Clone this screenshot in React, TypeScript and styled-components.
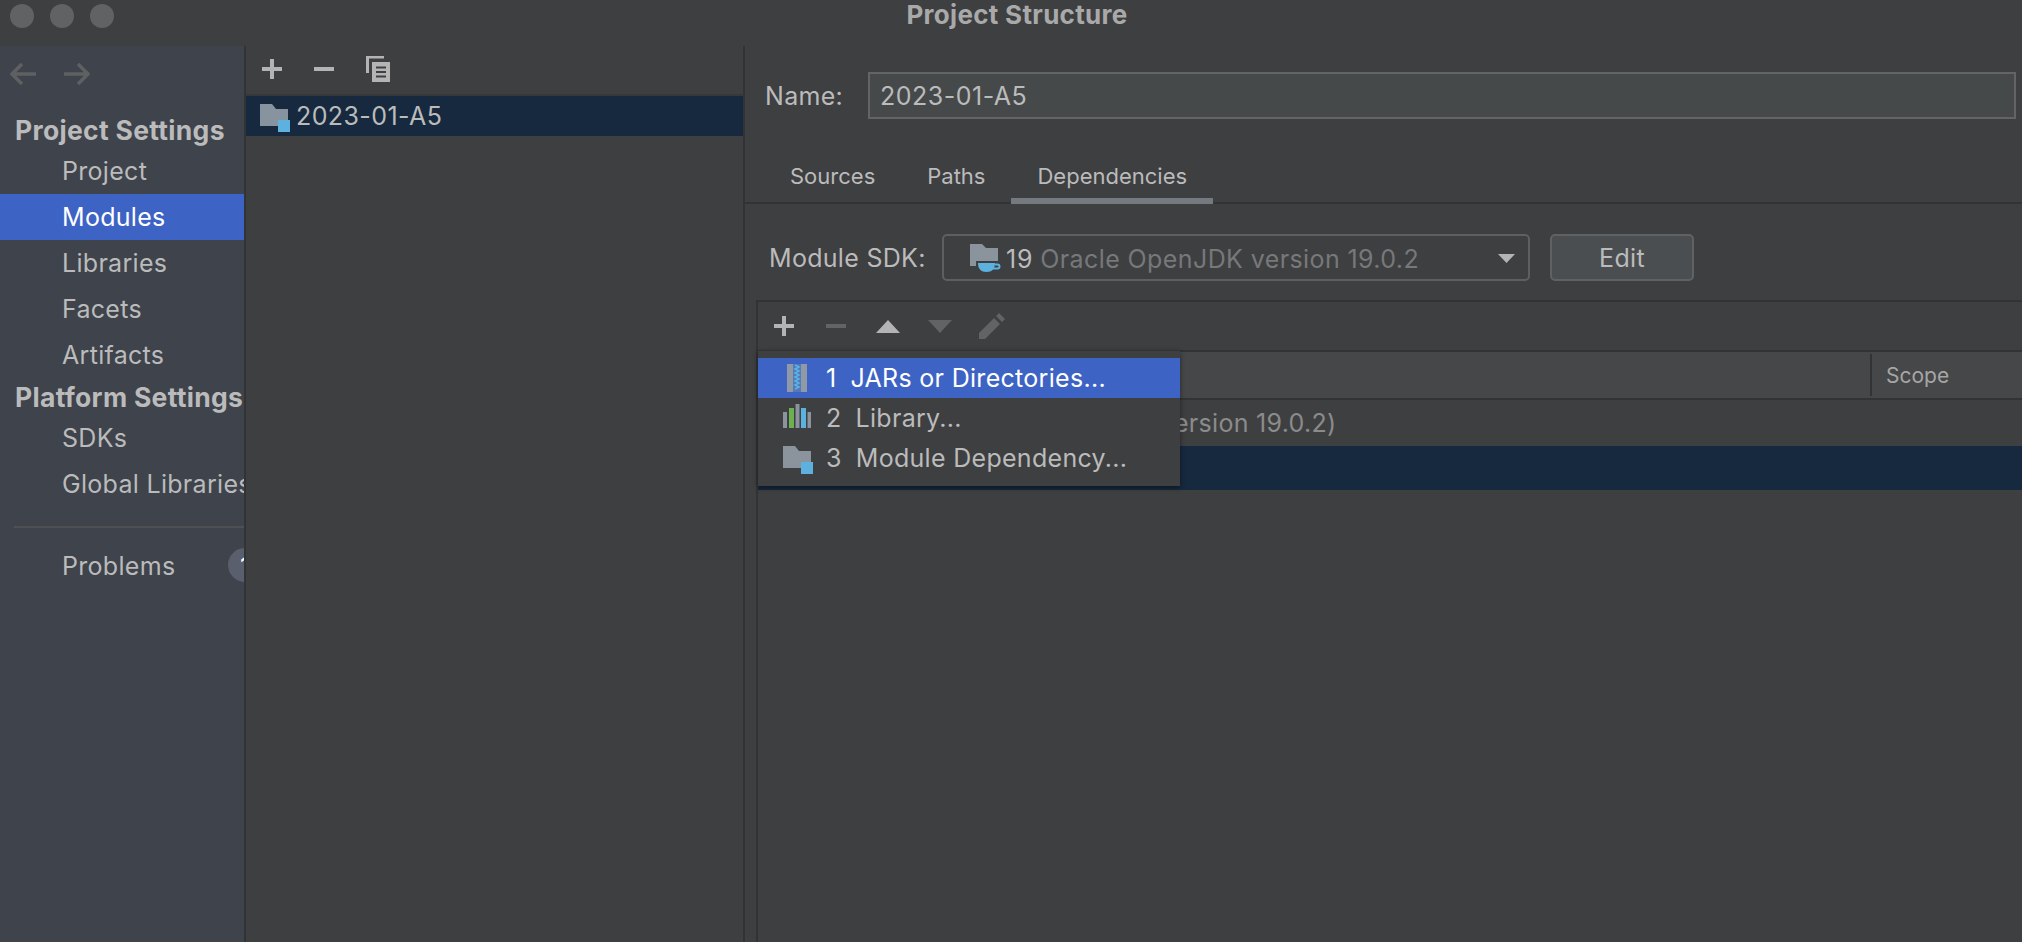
import React from "react";
import styled, { createGlobalStyle } from "styled-components";

const GlobalStyle = createGlobalStyle`
  html, body { margin: 0; padding: 0; height: 100%; background: #3e3f41; overflow: hidden; }
  * { box-sizing: border-box; }
`;

const Window = styled.div`
  width: 2022px;
  height: 942px;
  display: flex;
  flex-direction: column;
  background: #3e3f41;
  color: #bbbbbb;
  font-family: Inter, "Liberation Sans", sans-serif;
  font-size: 25px;
  letter-spacing: 0.3px;
  overflow: hidden;
`;

const TitleBar = styled.header`
  height: 46px;
  flex: none;
  display: flex;
  align-items: flex-start;
  padding: 4px 0 0 10px;
  position: relative;
`;

const Lights = styled.div`
  display: flex;
  gap: 16px;
`;

const Light = styled.span`
  width: 24px;
  height: 24px;
  border-radius: 50%;
  background: #616263;
`;

const Title = styled.div`
  position: absolute;
  top: 0;
  left: 12px;
  right: 0;
  text-align: center;
  line-height: 30px;
  font-size: 26px;
  font-weight: 700;
  color: #a9a9a9;
`;

const Body = styled.div`
  flex: 1;
  display: flex;
  min-height: 0;
`;

const Sidebar = styled.nav`
  width: 246px;
  flex: none;
  background: #3e434c;
  border-right: 2px solid #313335;
  overflow: hidden;
  position: relative;
`;

const History = styled.div`
  height: 65px;
  padding: 0 0 9px 10px;
  display: flex;
  gap: 28px;
  align-items: center;
`;

const Heading = styled.div<{ $h: number }>`
  height: ${(p) => p.$h}px;
  padding: 1px 0 0 15px;
  display: flex;
  align-items: center;
  font-weight: 700;
  font-size: 26.5px;
  color: #bbbbbb;
  white-space: nowrap;
`;

const NavItem = styled.div<{ $active?: boolean }>`
  height: 46px;
  padding-left: 62px;
  display: flex;
  align-items: center;
  white-space: nowrap;
  background: ${(p) => (p.$active ? "#3d63c4" : "transparent")};
  color: ${(p) => (p.$active ? "#ffffff" : "#bbbbbb")};
`;

const NavDivider = styled.div`
  height: 2px;
  margin: 19px 0 15px 14px;
  background: #4f5054;
`;

const Badge = styled.span`
  position: absolute;
  left: 228px;
  top: 502px;
  width: 34px;
  height: 34px;
  border-radius: 50%;
  background: #5a5f6e;
  color: #ffffff;
  font-size: 22px;
  font-weight: 600;
  display: flex;
  align-items: center;
  justify-content: center;
`;

const ListPanel = styled.section`
  width: 499px;
  flex: none;
  border-right: 2px solid #313335;
  display: flex;
  flex-direction: column;
`;

const ListTools = styled.div`
  height: 50px;
  flex: none;
  border-bottom: 2px solid #37383a;
  display: flex;
  align-items: center;
  padding: 0 0 2px 16px;
  gap: 32px;
`;

const ModuleRow = styled.div`
  height: 40px;
  flex: none;
  background: #17293e;
  display: flex;
  align-items: center;
  padding-left: 14px;
  gap: 6px;
  letter-spacing: 0.4px;
  svg {
    margin-top: 4px;
  }
`;

const Detail = styled.section`
  flex: 1;
  min-width: 0;
  display: flex;
  flex-direction: column;
`;

const NameRow = styled.div`
  height: 73px;
  flex: none;
  padding: 26px 6px 0 20px;
  display: flex;
  align-items: flex-start;
`;

const NameLabel = styled.label`
  line-height: 49px;
  width: 103px;
  flex: none;
`;

const NameInput = styled.div`
  flex: 1;
  height: 47px;
  background: #45494a;
  border: 2px solid #646464;
  padding-left: 10px;
  line-height: 45px;
  letter-spacing: 0.5px;
`;

const Tabs = styled.div`
  height: 85px;
  flex: none;
  border-bottom: 2px solid #313335;
  padding: 34px 0 0 19px;
  display: flex;
  align-items: stretch;
`;

const Tab = styled.div<{ $active?: boolean }>`
  height: 51px;
  padding: 0 26px;
  line-height: 46px;
  font-size: 22px;
  letter-spacing: 0;
  border-bottom: 6px solid ${(p) => (p.$active ? "#747a80" : "transparent")};
`;

const SdkRow = styled.div`
  height: 96px;
  flex: none;
  padding: 30px 0 0 24px;
  display: flex;
  align-items: flex-start;
`;

const SdkLabel = styled.label`
  line-height: 49px;
  width: 173px;
  flex: none;
  white-space: nowrap;
`;

const Combo = styled.div`
  width: 588px;
  height: 47px;
  border: 2px solid #5e6060;
  border-radius: 5px;
  background: #3e3f41;
  display: flex;
  align-items: center;
  padding: 2px 13px 0 26px;
`;

const ComboVersion = styled.span`
  margin-left: 5px;
  letter-spacing: 0.8px;
`;

const ComboHint = styled.span`
  margin-left: 7px;
  color: #77787a;
  flex: 1;
  white-space: nowrap;
  letter-spacing: 0.4px;
`;

const EditButton = styled.button`
  width: 144px;
  height: 47px;
  margin-left: 20px;
  border: 2px solid #5f6162;
  border-radius: 5px;
  background: #4b4e50;
  color: #bbbbbb;
  font: inherit;
  letter-spacing: inherit;
`;

const DepsBox = styled.div`
  flex: 1;
  margin-left: 11px;
  border-left: 2px solid #313335;
  border-top: 2px solid #313335;
  display: flex;
  flex-direction: column;
  position: relative;
`;

const DepsTools = styled.div`
  height: 48px;
  flex: none;
  display: flex;
  align-items: center;
`;

const ToolSlot = styled.span`
  width: 52px;
  flex: none;
  display: flex;
  justify-content: center;
`;

const TableHead = styled.div`
  height: 50px;
  flex: none;
  background: #464749;
  border-top: 2px solid #313335;
  border-bottom: 2px solid #313335;
  display: flex;
  justify-content: flex-end;
  align-items: stretch;
`;

const ScopeCol = styled.div`
  width: 152px;
  margin: 2px 0;
  border-left: 2px solid #313335;
  padding-left: 14px;
  display: flex;
  align-items: center;
  font-size: 21px;
  letter-spacing: 0;
  color: #a6a6a6;
`;

const TableRow = styled.div<{ $selected?: boolean }>`
  height: ${(p) => (p.$selected ? 44 : 46)}px;
  flex: none;
  background: ${(p) => (p.$selected ? "#17293e" : "transparent")};
  display: flex;
  align-items: center;
  padding-left: 126px;
  color: #8b8b8b;
  white-space: nowrap;
`;

const Popup = styled.div`
  position: absolute;
  left: 0;
  top: 48px;
  width: 422px;
  height: 136px;
  padding-top: 7px;
  background: #3e3f41;
  border-top: 1px solid #323334;
  box-shadow: 0 2px 5px rgba(0, 0, 0, 0.45);
  z-index: 2;
`;

const PopupItem = styled.div<{ $active?: boolean }>`
  height: 40px;
  display: flex;
  align-items: center;
  background: ${(p) => (p.$active ? "#3d63c4" : "transparent")};
  color: ${(p) => (p.$active ? "#ffffff" : "#bbbbbb")};
  white-space: nowrap;
`;

const PopupIcon = styled.span<{ $pad: number; $nudge?: number }>`
  width: 68px;
  flex: none;
  display: flex;
  justify-content: flex-start;
  padding-left: ${(p) => p.$pad}px;
  margin-top: ${(p) => p.$nudge ?? 0}px;
`;

const PopupNumber = styled.span`
  margin-right: 14px;
  flex: none;
`;

const GREY = "#b4b4b4";
const DIM = "#626365";

const PlusIcon = ({ color = GREY }: { color?: string }) => (
  <svg width="20" height="20" viewBox="0 0 20 20">
    <path d="M8 0h4v8h8v4h-8v8H8v-8H0V8h8z" fill={color} />
  </svg>
);

const MinusIcon = ({ color = GREY }: { color?: string }) => (
  <svg width="20" height="20" viewBox="0 0 20 20">
    <path d="M0 8h20v4H0z" fill={color} />
  </svg>
);

const CopyIcon = () => (
  <svg width="24" height="26" viewBox="0 0 24 26">
    <path d="M0 0h18v2.500H3V17H0z" fill={GREY} />
    <path d="M6 6h18v20H6z" fill={GREY} />
    <path d="M10 10.500h10v2H10zM10 15h10v2H10zM10 19.500h10v2H10z" fill="#3e3f41" />
  </svg>
);

const ArrowIcon = ({ flip }: { flip?: boolean }) => (
  <svg width="26" height="26" viewBox="0 0 26 26" style={flip ? { transform: "scaleX(-1)" } : undefined}>
    <path d="M12 3 2 13l10 10M2 13h24" fill="none" stroke="#5f6062" strokeWidth="3.500" />
  </svg>
);

const ModuleFolderIcon = () => (
  <svg width="30" height="28" viewBox="0 0 30 28">
    <path d="M0 0h12l4 5h12v17H0z" fill="#87939f" />
    <path d="M18 16h12v12H18z" fill="#5cb1de" />
  </svg>
);

const JdkFolderIcon = () => (
  <svg width="31" height="29" viewBox="0 0 31 29">
    <path d="M0 0h12l4 4h12v18H0z" fill="#8b939c" />
    <path d="M6 17h24v12H6z" fill="#3e3f41" />
    <path d="M0 17h6v5H0z" fill="#8b939c" />
    <path d="M8 19h17c0 6-3 9-8.500 9S8 25 8 19z" fill="#5cb1de" />
    <path d="M25 20.500h2.500a2 2 0 0 1 0 4H23" fill="none" stroke="#5cb1de" strokeWidth="2" />
  </svg>
);

const TriangleIcon = ({ down, color }: { down?: boolean; color: string }) => (
  <svg width="24" height="13" viewBox="0 0 24 13">
    <path d={down ? "M0 0h24L12 13z" : "M12 0l12 13H0z"} fill={color} />
  </svg>
);

const PencilIcon = () => (
  <svg width="26" height="26" viewBox="0 0 26 26">
    <path d="M0 26v-6L15 5l6 6L6 26zM17 3l3-3 6 6-3 3z" fill={DIM} />
  </svg>
);

const ComboArrow = () => (
  <svg width="17" height="9" viewBox="0 0 17 9">
    <path d="M0 0h17L8.500 9z" fill="#b4b4b4" />
  </svg>
);

const JarIcon = () => (
  <svg width="20" height="28" viewBox="0 0 20 28">
    <path d="M0 0h20v28H0z" fill="#8f9aa6" />
    <path d="M6 0h8v28H6z" fill="#5578b8" />
    <path
      d="M8 1l4 2-4 2 4 2-4 2 4 2-4 2 4 2-4 2 4 2-4 2 4 2-4 2"
      fill="none"
      stroke="#59b4e6"
      strokeWidth="1.500"
    />
  </svg>
);

const LibraryIcon = () => (
  <svg width="28" height="24" viewBox="0 0 28 24">
    <path d="M0 8h4v16H0z" fill="#8b939c" />
    <path d="M6 4h5v20H6z" fill="#6cb14f" />
    <path d="M12.500 0h4v24h-4z" fill="#8b939c" />
    <path d="M18 4h5v20h-5z" fill="#5cb1de" />
    <path d="M24.500 8h3.500v16h-3.500z" fill="#8b939c" />
  </svg>
);

const MenuFolderIcon = () => (
  <svg width="30" height="28" viewBox="0 0 30 28">
    <path d="M0 0h12l4 5h12v17H0z" fill="#8b939c" />
    <path d="M18 16h12v12H18z" fill="#5cb1de" />
  </svg>
);

const sections = [
  { title: "Project Settings", height: 37, items: ["Project", "Modules", "Libraries", "Facets", "Artifacts"] },
  { title: "Platform Settings", height: 37, items: ["SDKs", "Global Libraries"] },
];

const App = () => {
  return (
    <Window>
      <GlobalStyle />
      <TitleBar>
        <Lights>
          <Light />
          <Light />
          <Light />
        </Lights>
        <Title>Project Structure</Title>
      </TitleBar>
      <Body>
        <Sidebar>
          <History>
            <ArrowIcon />
            <ArrowIcon flip />
          </History>
          {sections.map((s) => (
            <React.Fragment key={s.title}>
              <Heading $h={s.height}>{s.title}</Heading>
              {s.items.map((item) => (
                <NavItem key={item} $active={item === "Modules"}>
                  {item}
                </NavItem>
              ))}
            </React.Fragment>
          ))}
          <NavDivider />
          <NavItem>Problems</NavItem>
          <Badge>1</Badge>
        </Sidebar>

        <ListPanel>
          <ListTools>
            <PlusIcon />
            <MinusIcon />
            <CopyIcon />
          </ListTools>
          <ModuleRow>
            <ModuleFolderIcon />
            <span>2023-01-A5</span>
          </ModuleRow>
        </ListPanel>

        <Detail>
          <NameRow>
            <NameLabel>Name:</NameLabel>
            <NameInput>2023-01-A5</NameInput>
          </NameRow>
          <Tabs>
            <Tab>Sources</Tab>
            <Tab>Paths</Tab>
            <Tab $active>Dependencies</Tab>
          </Tabs>
          <SdkRow>
            <SdkLabel>Module SDK:</SdkLabel>
            <Combo>
              <JdkFolderIcon />
              <ComboVersion>19</ComboVersion>
              <ComboHint>Oracle OpenJDK version 19.0.2</ComboHint>
              <ComboArrow />
            </Combo>
            <EditButton>Edit</EditButton>
          </SdkRow>
          <DepsBox>
            <DepsTools>
              <ToolSlot><PlusIcon /></ToolSlot>
              <ToolSlot><MinusIcon color={DIM} /></ToolSlot>
              <ToolSlot><TriangleIcon color={GREY} /></ToolSlot>
              <ToolSlot><TriangleIcon down color={DIM} /></ToolSlot>
              <ToolSlot><PencilIcon /></ToolSlot>
            </DepsTools>
            <TableHead>
              <ScopeCol>Scope</ScopeCol>
            </TableHead>
            <TableRow>&lt; 19 (Oracle OpenJDK version 19.0.2)</TableRow>
            <TableRow $selected />
            <Popup>
              <PopupItem $active>
                <PopupIcon $pad={29}>
                  <JarIcon />
                </PopupIcon>
                <PopupNumber>1</PopupNumber>
                JARs or Directories...
              </PopupItem>
              <PopupItem>
                <PopupIcon $pad={25} $nudge={-4}>
                  <LibraryIcon />
                </PopupIcon>
                <PopupNumber>2</PopupNumber>
                Library...
              </PopupItem>
              <PopupItem>
                <PopupIcon $pad={25} $nudge={4}>
                  <MenuFolderIcon />
                </PopupIcon>
                <PopupNumber>3</PopupNumber>
                Module Dependency...
              </PopupItem>
            </Popup>
          </DepsBox>
        </Detail>
      </Body>
    </Window>
  );
};

export default App;
